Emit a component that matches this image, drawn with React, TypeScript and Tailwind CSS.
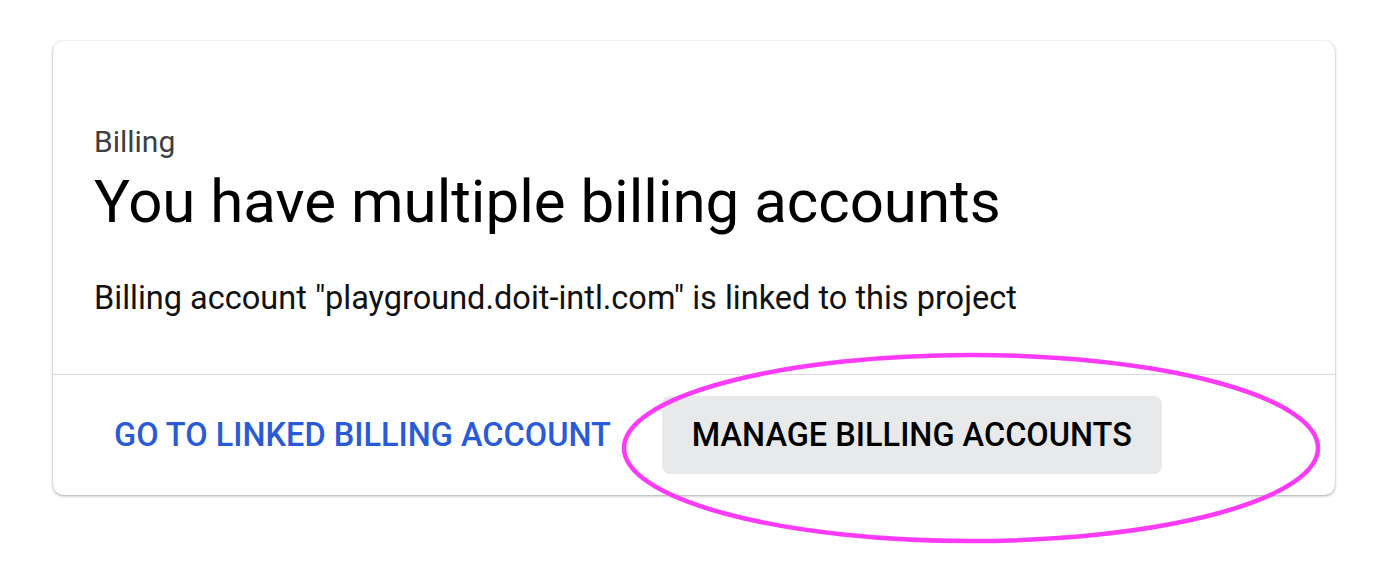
export default function App() {
  return (
    <div className="relative w-[1398px] h-[586px] bg-white font-['Roboto',sans-serif]">
      <div className="absolute left-[53px] top-[41px] w-[1282px] rounded-[10px] bg-white shadow-[0_1px_3px_rgba(0,0,0,0.35),0_0_1px_rgba(0,0,0,0.12)]">
        <div className="pl-[41px] pt-[85px] pb-[56px]">
          <p className="text-[30px] leading-[32px] text-[#3c4043]">Billing</p>
          <h1 className="mt-[8px] text-[60px] leading-[72px] text-black">You have multiple billing accounts</h1>
          <p className="mt-[40px] text-[32.5px] leading-[40px] text-[#111]">
            Billing account "playground.doit-intl.com" is linked to this project
          </p>
        </div>
        <div className="border-t border-[#dadce0] flex items-center gap-[51px] pl-[61px] pt-[21px] pb-[21px]">
          <button className="text-[32.5px] font-medium text-[#2a5bd7] uppercase">
            Go to linked billing account
          </button>
          <button className="h-[78px] px-[30px] rounded-[8px] bg-[#e8e9ea] text-[32.5px] font-medium text-black uppercase">
            Manage billing accounts
          </button>
        </div>
      </div>
      <svg className="absolute left-0 top-0 pointer-events-none" width="1398" height="586" viewBox="0 0 1398 586">
        <ellipse cx="971" cy="448" rx="347" ry="93" fill="none" stroke="#fb3bf7" strokeWidth="4.5" />
      </svg>
    </div>
  );
}
